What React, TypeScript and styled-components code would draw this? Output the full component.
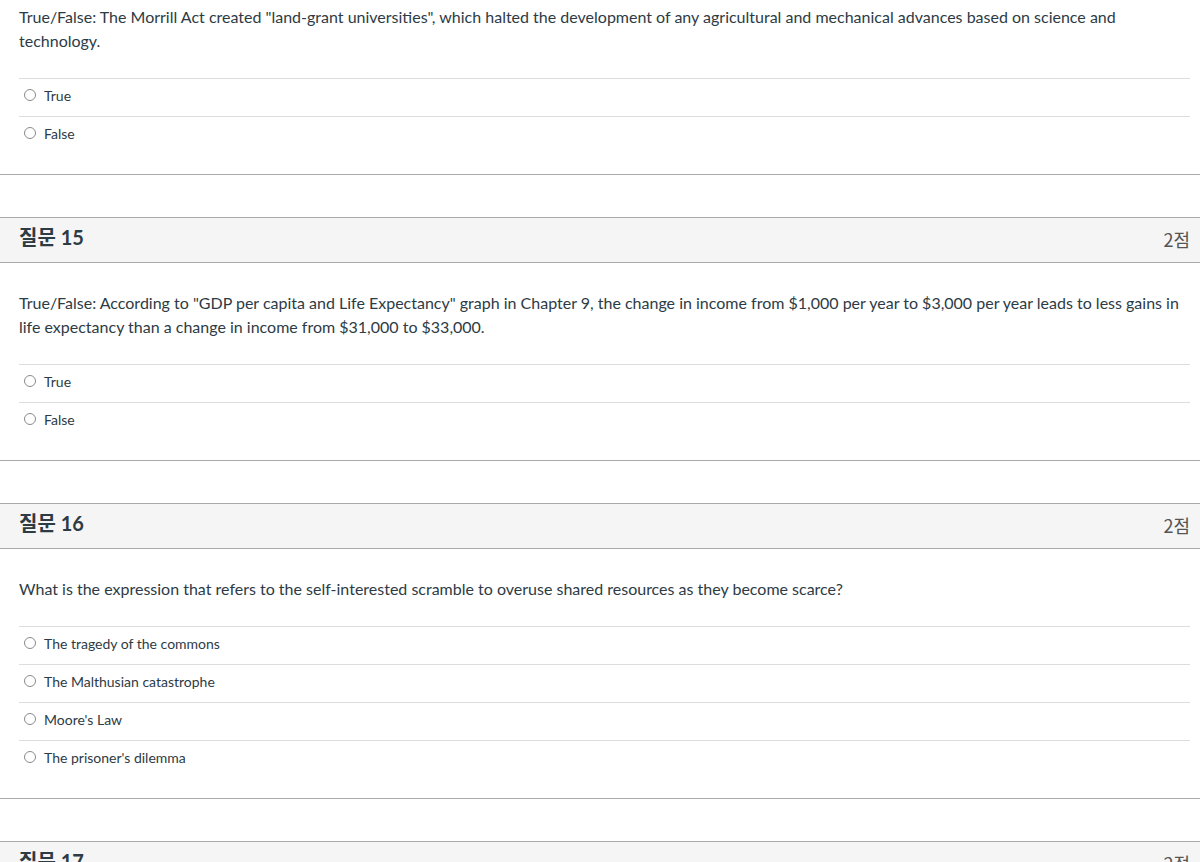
import styled, { createGlobalStyle } from 'styled-components';

const GlobalStyle = createGlobalStyle`
	body {
		margin: 0;
		background: #fff;
		font-family: Lato, "Noto Sans CJK KR", sans-serif;
		color: #2d3b45;
	}
`;

const Page = styled.div`
	width: 1200px;
`;

const Block = styled.div`
	border-bottom: 1px solid #a9a9a9;
	margin-bottom: 42px;
`;

const Header = styled.div`
	display: flex;
	align-items: center;
	justify-content: space-between;
	height: 44px;
	padding: 0 10px 0 19px;
	background: #f5f5f5;
	border-top: 1px solid #a9a9a9;
	border-bottom: 1px solid #a9a9a9;
`;

const QuestionName = styled.div`
	font-size: 20px;
	font-weight: 700;
	margin-bottom: 8px;
	font-family: Lato, "Noto Sans CJK KR", sans-serif;
`;

const Points = styled.div`
	font-size: 18px;
	color: #555;
	margin-bottom: 3px;
	font-family: "Noto Sans CJK KR", sans-serif;
`;

const Body = styled.div<{ $top: number }>`
	padding: ${(p) => p.$top}px 10px 20px 19px;
`;

const QuestionText = styled.div`
	font-size: 16px;
	line-height: 24px;
`;

const AnswerList = styled.div`
	margin-top: 25px;
`;

const Answer = styled.label`
	display: flex;
	align-items: center;
	box-sizing: border-box;
	height: 38px;
	padding-bottom: 5px;
	border-top: 1px solid #dddddd;
	font-size: 14px;
`;

const Radio = styled.span`
	width: 10px;
	height: 10px;
	border: 1px solid #8a8a8a;
	border-radius: 50%;
	margin: 0 8px 0 5px;
	background: #fff;
`;

type Question = {
	num?: number;
	text: string;
	answers: string[];
};

const questions: Question[] = [
	{
		text: 'True/False: The Morrill Act created "land-grant universities", which halted the development of any agricultural and mechanical advances based on science and technology.',
		answers: ['True', 'False'],
	},
	{
		num: 15,
		text: 'True/False: According to "GDP per capita and Life Expectancy" graph in Chapter 9, the change in income from $1,000 per year to $3,000 per year leads to less gains in life expectancy than a change in income from $31,000 to $33,000.',
		answers: ['True', 'False'],
	},
	{
		num: 16,
		text: 'What is the expression that refers to the self-interested scramble to overuse shared resources as they become scarce?',
		answers: [
			'The tragedy of the commons',
			'The Malthusian catastrophe',
			"Moore's Law",
			"The prisoner's dilemma",
		],
	},
	{
		num: 17,
		text: '',
		answers: [],
	},
];

function QuestionBlock({ q }: { q: Question }) {
	return (
		<Block>
			{q.num && (
				<Header>
					<QuestionName>질문 {q.num}</QuestionName>
					<Points>2점</Points>
				</Header>
			)}
			<Body $top={q.num ? 28 : 5}>
				<QuestionText>{q.text}</QuestionText>
				<AnswerList>
					{q.answers.map((a) => (
						<Answer key={a}>
							<Radio />
							{a}
						</Answer>
					))}
				</AnswerList>
			</Body>
		</Block>
	);
}

export default function App() {
	return (
		<Page>
			<GlobalStyle />
			{questions.map((q, i) => (
				<QuestionBlock key={i} q={q} />
			))}
		</Page>
	);
}
